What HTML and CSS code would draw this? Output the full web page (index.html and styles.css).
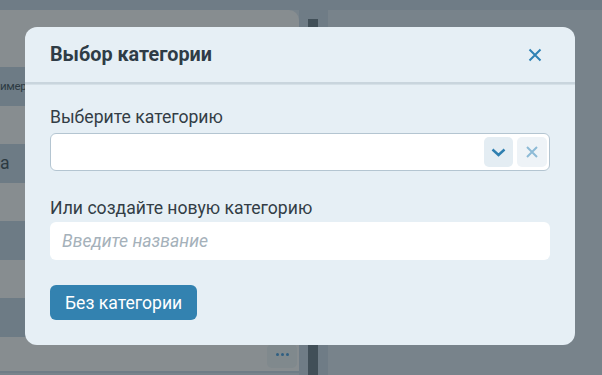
FILE: index.html
```html
<!DOCTYPE html>
<html lang="ru">
<head>
<meta charset="utf-8">
<title>Выбор категории</title>
<link rel="stylesheet" href="styles.css">
</head>
<body>
<div class="page">
  <div class="topbar"></div>
  <div class="main">
    <div class="panel">
      <div class="row head"></div>
      <div class="row dark"><span class="rtext small">имер</span></div>
      <div class="row"></div>
      <div class="row dark"><span class="rtext">а</span></div>
      <div class="row"></div>
      <div class="row dark"></div>
      <div class="row"></div>
      <div class="row dark"></div>
      <div class="row last"><span class="more"><i class="dot"></i><i class="dot"></i><i class="dot"></i></span></div>
    </div>
    <div class="gutter"><div class="scroll"></div></div>
    <div class="side"></div>
  </div>
</div>

<div class="modal">
  <div class="modal-header">
    <h2 class="modal-title">Выбор категории</h2>
    <button class="close" aria-label="Закрыть">
      <svg width="14" height="14" viewBox="0 0 14 14"><path d="M1.5 1.5 L12.5 12.5 M12.5 1.5 L1.5 12.5" stroke="#2f82b5" stroke-width="2" fill="none"/></svg>
    </button>
  </div>
  <div class="modal-body">
    <label class="label">Выберите категорию</label>
    <div class="select">
      <span class="sel-btn drop">
        <svg width="15" height="9" viewBox="0 0 15 9"><path d="M1.5 1.5 L7.5 7 L13.5 1.5" stroke="#2f7fb0" stroke-width="2.4" fill="none"/></svg>
      </span>
      <span class="sel-btn clear">
        <svg width="12" height="12" viewBox="0 0 12 12"><path d="M1 1 L11 11 M11 1 L1 11" stroke="#8dbad6" stroke-width="2" fill="none"/></svg>
      </span>
    </div>
    <label class="label second">Или создайте новую категорию</label>
    <input class="input" type="text" placeholder="Введите название">
    <button class="btn">Без категории</button>
  </div>
</div>
</body>
</html>
```
FILE: styles.css
```css
html, body {
  margin: 0;
  padding: 0;
}
body {
  width: 602px;
  height: 375px;
  overflow: hidden;
  background: #78838b;
  font-family: Roboto, "Noto Sans", sans-serif;
  position: relative;
}
.page {
  display: flex;
  flex-direction: column;
  height: 375px;
}
.topbar {
  height: 10px;
  background: #6f7c86;
  flex: none;
}
.main {
  display: flex;
  flex: 1;
}
.panel {
  width: 299px;
  background: #878d90;
  border-top-right-radius: 10px;
  display: flex;
  flex-direction: column;
  border-bottom: 2px solid #6f7c86;
  margin-bottom: 2px;
}
.row {
  height: 38.5px;
  display: flex;
  align-items: center;
  overflow: hidden;
}
.row.head {
  height: 57px;
}
.row.dark {
  background: #6d7b85;
}
.row.last {
  flex: 1;
  justify-content: flex-end;
  align-items: flex-end;
  padding: 0 2px 3px 0;
}
.rtext {
  font-size: 17.6px;
  color: #2c3a42;
}
.rtext.small {
  font-size: 11.5px;
  letter-spacing: -0.3px;
}
.more {
  width: 30px;
  height: 24px;
  border-radius: 5px;
  background: #80898d;
  display: flex;
  align-items: center;
  justify-content: center;
  gap: 2px;
  padding-bottom: 4px;
  box-sizing: border-box;
}
.dot {
  width: 3px;
  height: 3px;
  border-radius: 50%;
  background: #2f5f82;
}
.gutter {
  width: 29px;
  background: #6f7c86;
  display: flex;
  justify-content: center;
  padding-top: 9px;
}
.scroll {
  width: 10px;
  margin-right: 2px;
  background: #414f58;
}
.side {
  flex: 1;
}

.modal {
  position: absolute;
  left: 25px;
  top: 27px;
  width: 550px;
  height: 318px;
  background: #e6eff5;
  border-radius: 12px;
  display: flex;
  flex-direction: column;
  color: #333d45;
  overflow: hidden;
}
.modal-header {
  height: 57px;
  box-sizing: border-box;
  border-bottom: 2px solid #c9d5dd;
  box-shadow: 0 1px 0 #d5e0e7;
  display: flex;
  align-items: center;
  justify-content: space-between;
  padding: 0 25px;
  flex: none;
}
.modal-title {
  margin: 0;
  font-size: 19.8px;
  font-weight: 700;
  color: #2f3c46;
}
.close {
  border: 0;
  background: transparent;
  padding: 0;
  width: 20px;
  height: 20px;
  display: flex;
  align-items: center;
  justify-content: center;
  margin-right: 5px;
}
.modal-body {
  padding: 23px 25px 25px;
  display: flex;
  flex-direction: column;
  align-items: flex-start;
}
.label {
  font-size: 17.6px;
  line-height: 20px;
  color: #333d45;
  margin-bottom: 6px;
}
.label.second {
  margin-top: 27px;
  margin-bottom: 4px;
}
.select {
  width: 500px;
  height: 38px;
  box-sizing: border-box;
  background: #fff;
  border: 1px solid #b4c5d1;
  border-radius: 6px;
  display: flex;
  justify-content: flex-end;
  align-items: center;
  gap: 4px;
  padding-right: 2px;
}
.sel-btn {
  width: 29px;
  height: 30px;
  border-radius: 5px;
  display: flex;
  align-items: center;
  justify-content: center;
}
.sel-btn.drop {
  background: #e4edf3;
}
.sel-btn.clear {
  width: 30px;
  background: #eef3f7;
}
.input {
  width: 500px;
  height: 38px;
  box-sizing: border-box;
  border: 0;
  border-radius: 6px;
  background: #fff;
  padding: 0 12px;
  font-family: inherit;
  font-size: 17.6px;
  outline: none;
}
.input::placeholder {
  color: #a5b1ba;
  font-style: italic;
}
.btn {
  margin-top: 25px;
  height: 35px;
  padding: 0 15px;
  border: 0;
  border-radius: 6px;
  background: #3382b0;
  color: #fff;
  font-family: inherit;
  font-size: 17.6px;
}
```
